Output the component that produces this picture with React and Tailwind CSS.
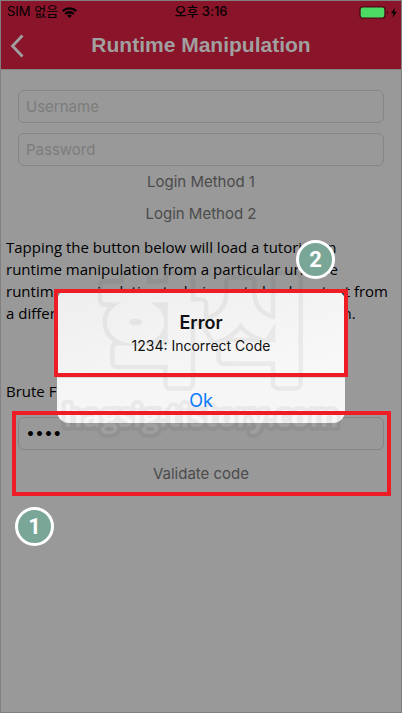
import React from 'react';

const fieldClass =
    "block w-full h-[33px] rounded-md border border-[#858585] bg-transparent px-[7px] text-black placeholder:text-[#7c7c7c] placeholder:opacity-100 outline-none";

const linkClass = "block h-8 mx-auto px-2 text-[15px] text-[#4b4b4b]";

function StepBadge({ number, className }) {
    return (
        <span className={`absolute z-30 flex size-[39px] items-center justify-center rounded-full border-[3px] border-white bg-[#79a696] font-['Roboto',sans-serif] text-[22px] font-bold text-white ${className}`}>
            {number}
        </span>
    );
}

function StatusBar() {
    return (
        <div className="grid h-[22px] grid-cols-3 items-center px-[6px] text-[13px] font-medium text-black">
            <div className="flex items-center gap-1">
                <span className="font-normal">SIM 없음</span>
                <svg width="15" height="11" viewBox="0 0 15 11" fill="none" stroke="currentColor" strokeWidth="2.4" aria-hidden="true">
                    <path d="M.8 4.1a9.6 9.6 0 0 1 13.4 0" />
                    <path d="M3.3 7a6 6 0 0 1 8.4 0" />
                    <path d="M7.5 11 5.1 8.7a3.5 3.5 0 0 1 4.8 0Z" fill="currentColor" stroke="none" />
                </svg>
            </div>
            <span className="text-center">오후 3:16</span>
            <div className="-mr-1 flex items-center justify-end">
                <svg width="40" height="13" viewBox="0 0 40 13" aria-hidden="true">
                    <rect x="1" y=".9" width="25" height="11.2" rx="2.5" fill="#4cd964" stroke="#4c0b17" strokeWidth="1.4" />
                    <path d="M28 4.5c1.6.6 1.6 3.4 0 4Z" fill="#4c0b17" />
                    <path d="M36 1.8 32 7.2h2.6L33.5 11.5l4.5-5.7h-2.9Z" fill="#000" />
                </svg>
            </div>
        </div>
    );
}

function Header() {
    return (
        <header className="border-b border-[#858585] bg-[#8a142a]">
            <StatusBar />
            <div className="relative flex h-[46px] items-center justify-center">
                <button type="button" aria-label="Back" className="absolute inset-y-0 left-0 px-[9px] text-[#a0a0a0]">
                    <svg width="14" height="24" viewBox="0 0 14 24" fill="none" stroke="currentColor" strokeWidth="2.8" aria-hidden="true">
                        <path d="M12.5 1.5 2.5 12l10 10.5" />
                    </svg>
                </button>
                <h1 className="pb-0.5 font-['Liberation_Sans',sans-serif] text-[21px] font-bold text-[#a0a0a0]">Runtime Manipulation</h1>
            </div>
        </header>
    );
}

function Watermark() {
    const logo = {
        x: 147,
        y: 103,
        fontSize: 112,
        fontWeight: 900,
        fontFamily: "'Noto Sans CJK KR', sans-serif",
        children: '학식',
    };
    const site = {
        x: 144,
        y: 157,
        fontSize: 30,
        fontWeight: 700,
        fontFamily: "'Open Sans', sans-serif",
        children: 'hagsig.tistory.com',
    };

    return (
        <svg className="pointer-events-none absolute -top-5 left-0 z-20 overflow-visible" width="288" height="170" viewBox="0 0 288 170" textAnchor="middle" strokeLinejoin="round" aria-hidden="true">
            <mask id="logo-outline" maskUnits="userSpaceOnUse" x="0" y="-20" width="288" height="190">
                <text {...logo} fill="#fff" stroke="#fff" strokeWidth="14" />
                <text {...logo} fill="#000" stroke="#000" strokeWidth="5" />
            </mask>
            <mask id="site-outline" maskUnits="userSpaceOnUse" x="-10" y="110" width="308" height="80">
                <text {...site} fill="#fff" stroke="#fff" strokeWidth="8" />
                <text {...site} fill="#000" />
            </mask>
            <rect x="0" y="-20" width="288" height="190" fill="#000" fillOpacity=".05" mask="url(#logo-outline)" />
            <rect x="-10" y="110" width="308" height="80" fill="#000" fillOpacity=".05" mask="url(#site-outline)" />
            <text {...site} fill="#fff" fillOpacity=".06" />
        </svg>
    );
}

function ErrorDialog() {
    return (
        <div className="fixed inset-0 z-10 flex items-center justify-center">
            <div role="alertdialog" aria-labelledby="error-title" aria-describedby="error-text" className="relative w-72">
                <div className="rounded-xl bg-[#f6f6f6] text-center">
                    <div className="h-[88px] rounded-t-xl border-b border-[#dadada] bg-gradient-to-br from-[#eeeeee] to-[#f9f9f9] pt-[22px]">
                        <h2 id="error-title" className="text-lg leading-[22px] font-semibold text-[#111]">Error</h2>
                        <p id="error-text" className="text-sm leading-6 text-[#111]">1234: Incorrect Code</p>
                    </div>
                    <button type="button" className="h-[45px] w-full text-lg text-[#0a7aff]">Ok</button>
                </div>
                <Watermark />
                <div className="pointer-events-none absolute -inset-x-[3px] -top-px z-20 h-[88px] border-4 border-[#ee1c24]" />
                <StepBadge number={2} className="-top-[50px] right-[10px]" />
            </div>
        </div>
    );
}

export default function App() {
    return (
        <div className="min-h-screen border border-[#808080] bg-[#999999] font-['Inter','Noto_Sans_CJK_KR',sans-serif]">
            <Header />
            <main className="pt-5">
                <form className="px-[17px]">
                    <input type="text" placeholder="Username" aria-label="Username" className={`${fieldClass} text-[15px]`} />
                    <input type="password" placeholder="Password" aria-label="Password" className={`${fieldClass} mt-[10px] text-[15px]`} />
                    <button type="button" className={linkClass}>Login Method 1</button>
                    <button type="button" className={linkClass}>Login Method 2</button>
                </form>

                <p className="mt-1.5 px-[5px] font-['Open_Sans',sans-serif] text-[15px] leading-[22px] text-black">
                    Tapping the button below will load a tutorial on<br />
                    runtime manipulation from a particular url. Use<br />
                    runtime manipulation techniques to load content from<br />
                    a different url which is not used in the application.
                </p>

                <label htmlFor="code" className="mt-14 block px-[5px] font-['Open_Sans',sans-serif] text-[15px] leading-[22px] text-black">
                    Brute Force the code
                </label>
                <form className="relative mt-[15px] px-[17px]">
                    <input id="code" type="password" defaultValue="1234" className={`${fieldClass} font-['DejaVu_Sans',sans-serif] text-sm font-bold`} />
                    <button type="button" className={`${linkClass} mt-2`}>Validate code</button>
                    {/* Step outline */}
                    <div className="pointer-events-none absolute -inset-y-[6px] left-[11px] right-[10px] z-20 border-4 border-[#ee1c24]" />
                    <StepBadge number={1} className="top-[90px] left-[14px]" />
                </form>
            </main>
            <ErrorDialog />
        </div>
    );
}
